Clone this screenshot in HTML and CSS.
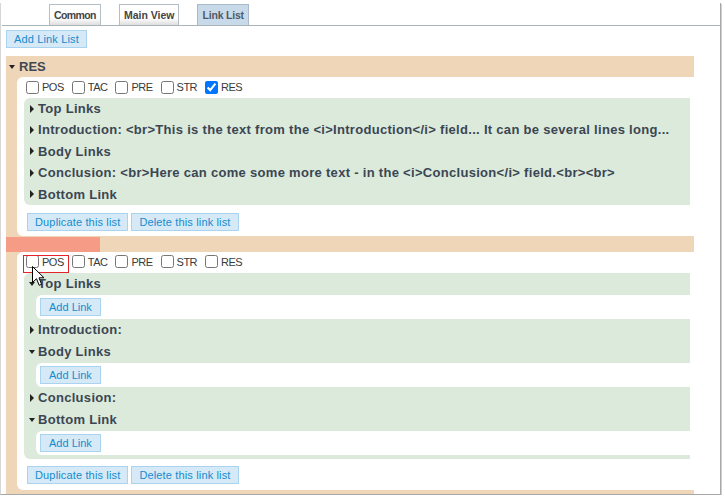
FILE: index.html
```html
<!DOCTYPE html>
<html>
<head>
<meta charset="utf-8">
<title>Link List</title>
<link rel="stylesheet" href="styles.css">
</head>
<body>
<div class="frame">
  <div class="tabs">
    <div class="tab first-tab">Common</div>
    <div class="tab">Main View</div>
    <div class="tab active">Link List</div>
  </div>
  <div class="content">
    <button class="btn">Add Link List</button>

    <div class="list first">
      <div class="list-head"><span class="tri-down big"></span><span class="list-title">RES</span></div>
      <div class="list-body">
        <div class="cats">
          <label class="cat"><input type="checkbox"><span>POS</span></label>
          <label class="cat"><input type="checkbox"><span>TAC</span></label>
          <label class="cat"><input type="checkbox"><span>PRE</span></label>
          <label class="cat"><input type="checkbox"><span>STR</span></label>
          <label class="cat"><input type="checkbox" checked><span>RES</span></label>
        </div>
        <div class="sections compact">
          <div class="sec-row"><span class="ico"><span class="tri-right"></span></span>Top Links</div>
          <div class="sec-row"><span class="ico"><span class="tri-right"></span></span>Introduction: &lt;br&gt;This is the text from the &lt;i&gt;Introduction&lt;/i&gt; field... It can be several lines long...</div>
          <div class="sec-row"><span class="ico"><span class="tri-right"></span></span>Body Links</div>
          <div class="sec-row"><span class="ico"><span class="tri-right"></span></span>Conclusion: &lt;br&gt;Here can come some more text - in the &lt;i&gt;Conclusion&lt;/i&gt; field.&lt;br&gt;&lt;br&gt;</div>
          <div class="sec-row"><span class="ico"><span class="tri-right"></span></span>Bottom Link</div>
        </div>
        <div class="actions">
          <button class="btn">Duplicate this list</button>
          <button class="btn">Delete this link list</button>
        </div>
      </div>
    </div>

    <div class="list second">
      <div class="list-head short"><span class="drop-mark"></span></div>
      <div class="list-body">
        <div class="cats overlay-host">
          <label class="cat"><input type="checkbox"><span>POS</span></label>
          <label class="cat"><input type="checkbox"><span>TAC</span></label>
          <label class="cat"><input type="checkbox"><span>PRE</span></label>
          <label class="cat"><input type="checkbox"><span>STR</span></label>
          <label class="cat"><input type="checkbox"><span>RES</span></label>
          <span class="focus-ring"></span>
          <svg class="cursor" width="13" height="21" viewBox="0 0 13 21"><path d="M0.5 0.5 L0.5 16.5 L4.5 12.7 L7.2 19.3 L9.6 18.3 L7 11.8 L12 11.8 Z" fill="#fff" stroke="#000" stroke-width="1" stroke-linejoin="miter"/></svg>
        </div>
        <div class="sections padded">
          <div class="sec-row"><span class="ico"><span class="tri-down"></span></span>Top Links</div>
          <div class="sub"><button class="btn small">Add Link</button></div>
          <div class="sec-row"><span class="ico"><span class="tri-right"></span></span>Introduction:</div>
          <div class="sec-row"><span class="ico"><span class="tri-down"></span></span>Body Links</div>
          <div class="sub"><button class="btn small">Add Link</button></div>
          <div class="sec-row"><span class="ico"><span class="tri-right"></span></span>Conclusion:</div>
          <div class="sec-row"><span class="ico"><span class="tri-down"></span></span>Bottom Link</div>
          <div class="sub"><button class="btn small">Add Link</button></div>
        </div>
        <div class="actions tight">
          <button class="btn">Duplicate this list</button>
          <button class="btn">Delete this link list</button>
        </div>
      </div>
    </div>
  </div>
</div>
</body>
</html>
```

FILE: styles.css
```css
* { box-sizing: border-box; }

body {
  margin: 0;
  background: #fff;
  font-family: "Liberation Sans", Arial, sans-serif;
  font-size: 11px;
  color: #333;
}

.frame {
  margin-top: 3px;
  width: 721px;
  height: 492px;
  border-left: 1px solid #d6d6d6;
  border-right: 1px solid #a8a8a8;
  border-bottom: 1px solid #a8a8a8;
  box-shadow: 1px 1px 0 #d0d0d0;
  overflow: hidden;
}

.tabs {
  display: flex;
  gap: 18px;
  padding: 1px 0 0 47px;
  border-bottom: 1px solid #a9b4b9;
  margin-left: 1px;
}

.tab {
  height: 21px;
  padding: 0 4px;
  line-height: 20px;
  border: 1px solid #b3bec6;
  border-bottom: none;
  background: linear-gradient(#ffffff 65%, #dedede);
  color: #444;
  font-size: 10.5px;
  font-weight: bold;
  letter-spacing: 0;
}

.tab.first-tab {
  letter-spacing: -0.6px;
}

.tab.active {
  background: #c8daea;
  border-color: #a9b9c7;
  color: #4f5a65;
  letter-spacing: -0.2px;
}

.content {
  padding: 4px 0 0 5px;
}

.btn {
  display: block;
  height: 18px;
  padding: 0 7px;
  margin: 0;
  border: 1px solid #a9d3ef;
  background: #d5e9f6;
  color: #168ccf;
  font-family: "Liberation Sans", Arial, sans-serif;
  font-size: 11px;
  line-height: 16px;
  letter-spacing: 0.15px;
}

.btn.small {
  padding: 0 8px;
  letter-spacing: 0;
}

.list {
  width: 688px;
  background: #f0d6b9;
}

.first {
  margin-top: 8px;
  padding-bottom: 1px;
}

.second {
  padding-bottom: 4px;
}

.list-head {
  height: 21px;
  display: flex;
  align-items: center;
  padding-left: 3px;
}

.list-head.short {
  height: 15px;
  padding-left: 0;
  align-items: stretch;
}

.drop-mark {
  width: 94px;
  background: #f69c86;
}

.list-title {
  margin-left: 4px;
  font-size: 13px;
  font-weight: bold;
  color: #3d4854;
}

.tri-down {
  display: inline-block;
  width: 0;
  height: 0;
  border-top: 4px solid #222;
  border-left: 3.5px solid transparent;
  border-right: 3.5px solid transparent;
}

.tri-down.big {
  border-top-width: 4.5px;
}

.tri-right {
  display: inline-block;
  width: 0;
  height: 0;
  border-left: 4px solid #222;
  border-top: 4px solid transparent;
  border-bottom: 4px solid transparent;
  margin-left: 1px;
}

.list-body {
  margin-left: 11px;
  background: #fff;
  border-radius: 6px 0 0 6px;
  padding-bottom: 5px;
}

.second .list-body {
  padding-bottom: 6px;
}

.cats {
  height: 20px;
  display: flex;
  align-items: center;
  gap: 8px;
  padding-left: 9px;
}

.overlay-host {
  position: relative;
}

.cat {
  display: flex;
  align-items: center;
  gap: 3px;
  color: #3a3a3a;
  letter-spacing: -0.5px;
}

.cat input {
  width: 13px;
  height: 13px;
  margin: 0;
}

.focus-ring {
  position: absolute;
  left: 6px;
  top: 3px;
  width: 46px;
  height: 18px;
  border: 1px solid #e3242b;
}

.cursor {
  position: absolute;
  left: 15px;
  top: 14px;
}

.sections {
  margin: 1px 4px 0 7px;
  background: #dbeadb;
  border-radius: 6px 0 0 6px;
}

.sections.padded {
  padding-bottom: 4px;
}

.sec-row {
  height: 22px;
  line-height: 22px;
  display: flex;
  align-items: center;
  padding-left: 5px;
  font-size: 13px;
  font-weight: bold;
  color: #3b4653;
  letter-spacing: 0.3px;
  white-space: nowrap;
}

.compact .sec-row {
  height: 21.4px;
  line-height: 21.4px;
}

.ico {
  width: 9px;
  display: flex;
  align-items: center;
  flex: none;
}

.sub {
  height: 24px;
  margin-left: 12px;
  padding: 3px 0 0 4px;
  background: #fff;
  border-radius: 6px 0 0 6px;
}

.actions {
  display: flex;
  gap: 3px;
  margin-top: 8px;
  padding-left: 10px;
}

.actions.tight {
  margin-top: 7px;
}
```
